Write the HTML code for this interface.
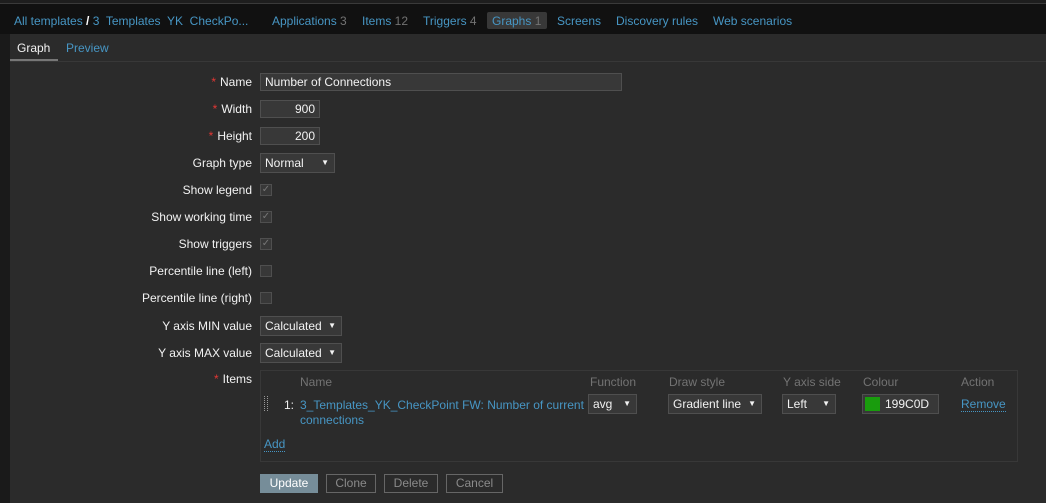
<!DOCTYPE html><html><head><style>
body{margin:0;width:1046px;height:503px;background:#1a1a1a;font-family:"Liberation Sans",sans-serif;font-size:12px;color:#f2f2f2;position:relative;overflow:hidden}
.a{position:absolute}
a,.l{color:#4796c4}
.g{color:#737373}
.lab{position:absolute;right:794px;text-align:right;white-space:nowrap}
.lab b{color:#e33734;font-weight:normal;margin-right:4px}
.in{position:absolute;left:260px;height:18px;border:1px solid #4f4f4f;background:#383838;box-sizing:border-box;line-height:16px;padding:0 4px;color:#f2f2f2}
.sel{position:absolute;height:20px;border:1px solid #4f4f4f;background:#383838;box-sizing:border-box;line-height:18px;padding:0 4px;color:#f2f2f2}
.sel:after{content:"▼";position:absolute;right:5px;font-size:8px;top:0}
.cb{position:absolute;left:260px;width:12px;height:12px;border:1px solid #4f4f4f;background:#383838;box-sizing:border-box;color:#777;font-size:10px;line-height:10px;text-align:center}
.btn{position:absolute;top:474px;height:19px;border:1px solid #666;box-sizing:border-box;line-height:17px;text-align:center;color:#8a8a8a}
</style></head><body>
<div class="a" style="left:0;top:0;width:1046px;height:3px;background:#1e1e1e"></div>
<div class="a" style="left:0;top:3px;width:1046px;height:1px;background:#3a3a3a"></div>
<div class="a" style="left:0;top:4px;width:1046px;height:30px;background:#111"></div>
<div class="a" style="top:14px;left:14px;white-space:nowrap">
<span class="l">All templates</span> <span style="color:#fff;font-weight:bold">/</span> <span class="l">3&nbsp; Templates&nbsp; YK&nbsp; CheckPo...</span>
</div>
<div class="a l" style="top:14px;left:272px">Applications <span class="g">3</span></div>
<div class="a l" style="top:14px;left:362px">Items <span class="g">12</span></div>
<div class="a l" style="top:14px;left:423px">Triggers <span class="g">4</span></div>
<div class="a" style="top:12px;left:487px;width:60px;height:17px;background:#383838;border-radius:2px"></div>
<div class="a l" style="top:14px;left:492px">Graphs <span class="g">1</span></div>
<div class="a l" style="top:14px;left:557px">Screens</div>
<div class="a l" style="top:14px;left:616px">Discovery rules</div>
<div class="a l" style="top:14px;left:713px">Web scenarios</div>
<div class="a" style="left:10px;top:34px;width:1036px;height:469px;background:#2b2b2b"></div>
<div class="a" style="left:10px;top:61px;width:1036px;height:1px;background:#383838"></div>
<div class="a" style="left:17px;top:41px;color:#f2f2f2">Graph</div>
<div class="a" style="left:10px;top:59px;width:48px;height:2px;background:#777"></div>
<div class="a l" style="left:66px;top:41px">Preview</div>

<div class="lab" style="top:75px"><b>*</b>Name</div><div class="in" style="top:73px;width:362px">Number of Connections</div>
<div class="lab" style="top:102px"><b>*</b>Width</div><div class="in" style="top:100px;width:60px;text-align:right">900</div>
<div class="lab" style="top:129px"><b>*</b>Height</div><div class="in" style="top:127px;width:60px;text-align:right">200</div>
<div class="lab" style="top:156px">Graph type</div><div class="sel" style="top:153px;left:260px;width:75px">Normal</div>
<div class="lab" style="top:183px">Show legend</div><div class="cb" style="top:184px">✓</div>
<div class="lab" style="top:210px">Show working time</div><div class="cb" style="top:211px">✓</div>
<div class="lab" style="top:237px">Show triggers</div><div class="cb" style="top:238px">✓</div>
<div class="lab" style="top:264px">Percentile line (left)</div><div class="cb" style="top:265px"></div>
<div class="lab" style="top:291px">Percentile line (right)</div><div class="cb" style="top:292px"></div>
<div class="lab" style="top:319px">Y axis MIN value</div><div class="sel" style="top:316px;left:260px;width:82px">Calculated</div>
<div class="lab" style="top:346px">Y axis MAX value</div><div class="sel" style="top:343px;left:260px;width:82px">Calculated</div>
<div class="lab" style="top:372px"><b>*</b>Items</div>

<div class="a" style="left:260px;top:370px;width:758px;height:92px;border:1px solid #383838;box-sizing:border-box"></div>
<div class="a g" style="top:375px;left:300px">Name</div>
<div class="a g" style="top:375px;left:590px">Function</div>
<div class="a g" style="top:375px;left:669px">Draw style</div>
<div class="a g" style="top:375px;left:783px">Y axis side</div>
<div class="a g" style="top:375px;left:863px">Colour</div>
<div class="a g" style="top:375px;left:961px">Action</div>
<div class="a" style="left:264px;top:396px;width:4px;height:15px;border-left:1px dotted #999;border-right:1px dotted #999;box-sizing:border-box"></div>
<div class="a" style="top:398px;left:284px">1:</div>
<div class="a l" style="top:398px;left:300px;width:290px;line-height:15px">3_Templates_YK_CheckPoint FW: Number of current connections</div>
<div class="sel" style="top:394px;left:588px;width:49px">avg</div>
<div class="sel" style="top:394px;left:668px;width:94px">Gradient line</div>
<div class="sel" style="top:394px;left:782px;width:54px">Left</div>
<div class="in" style="top:394px;left:862px;width:77px;height:20px;padding-left:22px;line-height:18px">199C0D</div>
<div class="a" style="top:397px;left:865px;width:15px;height:14px;background:#199c0d"></div>
<div class="a l" style="top:397px;left:961px;border-bottom:1px dotted #4796c4">Remove</div>
<div class="a l" style="top:437px;left:264px;border-bottom:1px dotted #4796c4">Add</div>

<div class="btn" style="left:260px;width:58px;background:#768d99;border-color:#768d99;color:#fff">Update</div>
<div class="btn" style="left:326px;width:50px">Clone</div>
<div class="btn" style="left:384px;width:54px">Delete</div>
<div class="btn" style="left:446px;width:57px">Cancel</div>
</body></html>
